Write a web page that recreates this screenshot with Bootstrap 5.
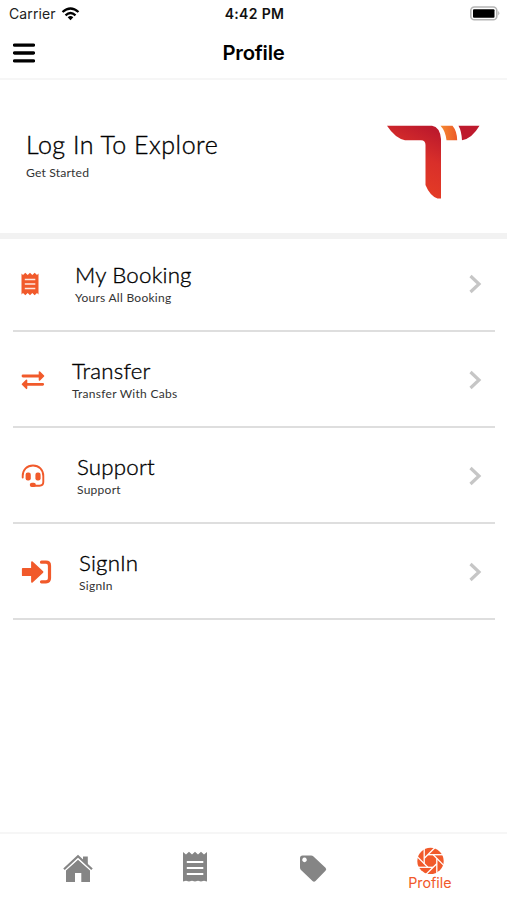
<!DOCTYPE html>
<html lang="en">
<head>
<meta charset="utf-8">
<meta name="viewport" content="width=device-width, initial-scale=1">
<title>Profile</title>
<link rel="stylesheet" href="https://cdn.jsdelivr.net/npm/bootstrap@5.3.0/dist/css/bootstrap.min.css">
<style>
  body { font-family: Inter, "Liberation Sans", sans-serif; color: #111; background: #fff; height: 900px; overflow: hidden; }
  svg { display: block; flex: none; }
  .status { height: 27px; padding: 0 7px 0 9px; font-size: 14px; line-height: 27px; }
  .status .carrier { font-size: 14px; color: #222; letter-spacing: .1px; }
  .status .clock { font-weight: 600; font-size: 14px; letter-spacing: .35px; }
  .topbar { height: 53px; border-bottom: 2px solid #f6f6f6; padding: 0 13px; }
  .topbar h1 { font-size: 20.3px; font-weight: 600; letter-spacing: -.2px; line-height: 51px; color: #000; }
  .avenir { font-family: Lato, "Open Sans", sans-serif; }
  .hero { height: 159px; border-bottom: 6px solid #f2f2f2; padding: 45px 27px 0 26px; }
  .hero h2 { font-size: 25px; line-height: 30px; margin: 4px 0 0; font-weight: 300; letter-spacing: .5px; color: #000; -webkit-text-stroke: .35px #000; }
  .hero p { font-size: 12.2px; line-height: 16px; margin: 6px 0 0; color: #333; letter-spacing: .15px; }
  .entry { height: 96px; border-bottom: 2px solid #dedede; margin: 0 12px 0 13px; padding: 24px 13px 0 8px; color: #111; text-decoration: none; }
  .entry:first-child { height: 93px; padding-top: 21px; }
  .entry h3 { font-size: 22.3px; line-height: 28px; margin: 1px 0 0; font-weight: 300; letter-spacing: .2px; color: #000; -webkit-text-stroke: .35px #000; }
  .entry p { font-size: 12px; line-height: 16px; margin: 1px 0 0; color: #333; letter-spacing: .27px; }
  .entry .glyph { height: 48px; }
  .tabs { height: 68px; border-top: 2px solid #f6f6f6; padding-left: 1px; }
  .tabs a { color: #858585; text-decoration: none; width: 117.3px; }
  .tabs .chosen { color: #f15a2b; font-size: 14.3px; line-height: 17px; }
</style>
<script src="https://cdn.jsdelivr.net/npm/bootstrap@5.3.0/dist/js/bootstrap.bundle.min.js"></script>
</head>
<body class="d-flex flex-column">
<div class="status row g-0 align-items-center">
  <div class="col d-flex align-items-center"><span class="carrier">Carrier</span>
    <svg class="ms-1" width="21" height="16" viewBox="0 0 20 16" fill="none" stroke="#000" stroke-width="2.3"><path d="M2 6Q10-1 18 6M5 9.3Q10 4.8 15 9.3"/><path d="M7.2 11.2Q10 8.8 12.8 11.2L10 14.2Z" fill="#000" stroke="none"/></svg></div>
  <div class="col-auto clock">4:42 PM</div>
  <div class="col d-flex justify-content-end">
    <svg width="31" height="16" viewBox="0 0 31 16"><rect x="1.8" y="1" width="26" height="12.8" rx="3.6" fill="#fff" stroke="#b5b5b5" stroke-width="1.6"/><rect x="4" y="3.2" width="21.5" height="8.6" rx="1"/><path d="M29.3 5.1q2 2.2 0 4.4z" fill="#aaa"/></svg></div>
</div>
<header class="topbar row g-0 align-items-center">
  <div class="col"><svg width="22" height="20" viewBox="0 0 22 20"><path d="M1.5 2.2h19M1.5 10h19M1.5 17.8h19" stroke="#000" stroke-width="3.3" stroke-linecap="round"/></svg></div>
  <h1 class="col-auto m-0">Profile</h1>
  <div class="col"></div>
</header>
<section class="hero avenir d-flex justify-content-between">
  <div><h2>Log In To Explore</h2><p>Get Started</p></div>
  <svg width="93" height="75" viewBox="0 0 93 75">
    <defs><linearGradient id="red" gradientUnits="userSpaceOnUse" x1="28" y1="60" x2="52" y2="8"><stop offset="0" stop-color="#e23a26"/><stop offset=".5" stop-color="#d92f2a"/><stop offset="1" stop-color="#bd1a2c"/></linearGradient>
    <linearGradient id="orange"><stop offset="0" stop-color="#f58a32"/><stop offset="1" stop-color="#ec5a28"/></linearGradient></defs>
    <path d="M0 .7H45Q53 2 54 14V73.5H50.500Q43 71 38.500 60V20Q38.500 15.200 34 15.200H18Q8 13 0 .7Z" fill="url(#red)"/>
    <path d="M53.500 .7H65.500Q70 6 70.200 15.200H59.500Q58.500 6 53.500 .7Z" fill="url(#orange)"/>
    <path d="M71.500 .7H92.500Q85 13.500 75 15.200Q74.500 6 71.500 .7Z" fill="#be1a2d"/>
  </svg>
</section>
<main class="avenir">
  <a class="entry d-flex" href="#">
    <div class="glyph d-flex align-items-center"><svg width="54" height="24" viewBox="0 0 54 24"><path d="M.5 1.5 2 3 4.3 .8 6.7 3 9 .8 11.3 3 13.7 .8 16 3 17.5 1.5V22.5L16 21 13.7 23.2 11.3 21 9 23.2 6.7 21 4.3 23.2 2 21 .5 22.5Z" fill="#f15a2b"/><path d="M3.8 7.5h10.5M3.8 12h10.5M3.8 16.5h10.5" stroke="#fff" stroke-opacity=".85" stroke-width="1.5"/></svg></div>
    <div class="flex-grow-1"><h3>My Booking</h3><p>Yours All Booking</p></div>
    <div class="glyph d-flex align-items-center"><svg width="14" height="20" viewBox="0 0 14 20"><path d="M2.5 2 11 10 2.5 18" fill="none" stroke="#c6c6c6" stroke-width="3.2"/></svg></div>
  </a>
  <a class="entry d-flex" href="#">
    <div class="glyph d-flex align-items-center"><svg width="51" height="24" viewBox="0 0 51 24"><path d="M2 8H18M6 16.3H21.7" stroke="#f15a2b" stroke-width="2.8" stroke-linecap="round"/><path d="M18.5 4 22.5 8 18.5 12ZM5.5 12.3 1.5 16.3 5.5 20.3Z" fill="#f15a2b" stroke="#f15a2b" stroke-width="1.6" stroke-linejoin="round"/></svg></div>
    <div class="flex-grow-1"><h3>Transfer</h3><p>Transfer With Cabs</p></div>
    <div class="glyph d-flex align-items-center"><svg width="14" height="20" viewBox="0 0 14 20"><path d="M2.5 2 11 10 2.5 18" fill="none" stroke="#c6c6c6" stroke-width="3.2"/></svg></div>
  </a>
  <a class="entry d-flex" href="#">
    <div class="glyph d-flex align-items-center"><svg width="56" height="24" viewBox="0 0 56 24"><path d="M1.7 13.5V12C1.7 5.5 6 1.5 12 1.5S22.3 5.5 22.3 12V18Q22.3 21.7 18.500 21.7H11.5" fill="none" stroke="#f15a2b" stroke-width="1.9" stroke-linecap="round"/><rect x="4.6" y="8.5" width="5.2" height="8" rx="2.2" fill="#f15a2b"/><rect x="14.4" y="8.5" width="5.2" height="8" rx="2.2" fill="#f15a2b"/><rect x="8.8" y="18.8" width="6" height="4.3" rx="2" fill="#f15a2b"/></svg></div>
    <div class="flex-grow-1"><h3>Support</h3><p>Support</p></div>
    <div class="glyph d-flex align-items-center"><svg width="14" height="20" viewBox="0 0 14 20"><path d="M2.5 2 11 10 2.5 18" fill="none" stroke="#c6c6c6" stroke-width="3.2"/></svg></div>
  </a>
  <a class="entry d-flex" href="#">
    <div class="glyph d-flex align-items-center"><svg width="58" height="24" viewBox="0 0 58 24"><path d="M1.8 8.8H11V2.2L21.5 12 11 21.8V15.2H1.8Z" fill="#f15a2b" stroke="#f15a2b" stroke-width="1.8" stroke-linejoin="round"/><path d="M20.5 2.2H25Q28.5 2.2 28.5 5.7V18.3Q28.5 21.8 25 21.8H20.5" fill="none" stroke="#f15a2b" stroke-width="3.2" stroke-linecap="round"/></svg></div>
    <div class="flex-grow-1"><h3>SignIn</h3><p>SignIn</p></div>
    <div class="glyph d-flex align-items-center"><svg width="14" height="20" viewBox="0 0 14 20"><path d="M2.5 2 11 10 2.5 18" fill="none" stroke="#c6c6c6" stroke-width="3.2"/></svg></div>
  </a>
</main>
<nav class="tabs mt-auto d-flex justify-content-center">
  <a href="#" class="d-flex align-items-center justify-content-center pt-1"><svg width="30" height="30" viewBox="0 0 30 30"><path d="M15 5.8 27 16.5V28H18.3V19H12V28H3V16.5Z" fill="#858585"/><path d="M20 2.5H24.8V11L20 7Z" fill="#858585"/><path d="M1 17 15 4.5 29 17" fill="none" stroke="#fff" stroke-width="1.1"/><path d="M1 15.2 15 2.3 29 15.2" fill="none" stroke="#858585" stroke-width="2.2"/></svg></a>
  <a href="#" class="d-flex align-items-center justify-content-center"><svg width="26" height="32" viewBox="0 0 26 32"><path d="M1 1 4 3.5 7 .8 10 3.5 13 .8 16 3.5 19 .8 22 3.5 25 1V30.5L22 29.8 19 30.5 16 29.8 13 30.5 10 29.8 7 30.5 4 29.8 1 30.5Z" fill="#858585"/><path d="M4.8 11H21.3M4.8 17H21.3M4.8 23H21.3" stroke="#fff" stroke-width="2"/></svg></a>
  <a href="#" class="d-flex align-items-center justify-content-center pt-1"><svg width="28" height="28" viewBox="0 0 28 28"><path fill-rule="evenodd" d="M3.5 .5H12Q13.5 .5 14.5 1.5L26.5 12.8Q28 14.2 26.5 15.7L16.5 26Q15 27.5 13.5 26L2 15Q1 14 1 12.5V3Q1 .5 3.5 .5ZM5.5 2.6a2.3 2.3 0 1 0 .01 0Z" fill="#858585"/></svg></a>
  <a href="#" class="chosen d-flex flex-column align-items-center pt-2"><svg class="mt-1" width="28" height="28" viewBox="-14.5 -15 28 28">
    <circle r="13.2" fill="#f15a2b"/>
    <g stroke="#fff" stroke-width="1.3"><path id="blade" d="M-2.500 -6.300H12.500"/><use href="#blade" transform="rotate(45)"/><use href="#blade" transform="rotate(90)"/><use href="#blade" transform="rotate(135)"/><use href="#blade" transform="rotate(180)"/><use href="#blade" transform="rotate(225)"/><use href="#blade" transform="rotate(270)"/><use href="#blade" transform="rotate(315)"/></g></svg>
    <span>Profile</span></a>
</nav>
</body>
</html>
